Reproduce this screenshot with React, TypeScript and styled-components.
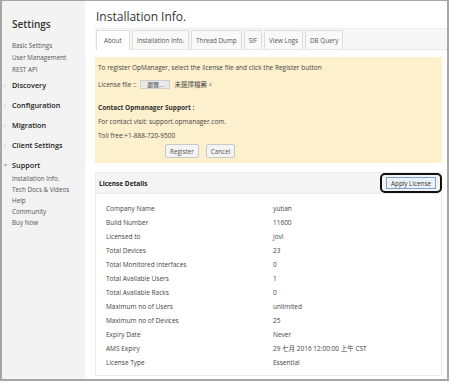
import React from "react";
import styled, { createGlobalStyle } from "styled-components";

const GlobalStyle = createGlobalStyle`
  html, body {
    margin: 0;
    padding: 0;
    background: #ffffff;
  }
  body {
    font-family: "Open Sans", "Noto Sans CJK TC", sans-serif;
    color: #444444;
  }
  * {
    box-sizing: border-box;
  }
`;

const sideGroups = [
  { title: "Discovery", open: false, items: [] as string[] },
  { title: "Configuration", open: false, items: [] as string[] },
  { title: "Migration", open: false, items: [] as string[] },
  { title: "Client Settings", open: false, items: [] as string[] },
  {
    title: "Support",
    open: true,
    items: ["Installation Info.", "Tech Docs & Videos", "Help", "Community", "Buy Now"],
  },
];

const tabs = ["About", "Installation Info.", "Thread Dump", "SIF", "View Logs", "DB Query"];

const details: [string, string][] = [
  ["Company Name", "yutian"],
  ["Build Number", "11600"],
  ["Licensed to", "jovi"],
  ["Total Devices", "23"],
  ["Total Monitored Interfaces", "0"],
  ["Total Available Users", "1"],
  ["Total Available Racks", "0"],
  ["Maximum no of Users", "unlimited"],
  ["Maximum no of Devices", "25"],
  ["Expiry Date", "Never"],
  ["AMS Expiry", "29 七月 2016 12:00:00 上午 CST"],
  ["License Type", "Essential"],
];

const App = () => {
  return (
    <Frame>
      <GlobalStyle />
      <Sidebar>
        <SideTitle>Settings</SideTitle>
        <SubList $top={9} $line={12}>
          <SubItem>Basic Settings</SubItem>
          <SubItem>User Management</SubItem>
          <SubItem>REST API</SubItem>
        </SubList>
        <GroupList>
          {sideGroups.map((g) => (
            <div key={g.title}>
              <GroupTitle>
                <Arrow>{g.open ? "▾" : "›"}</Arrow>
                {g.title}
              </GroupTitle>
              {g.items.length > 0 && (
                <SubList $top={1} $line={11}>
                  {g.items.map((i) => (
                    <SubItem key={i}>{i}</SubItem>
                  ))}
                </SubList>
              )}
            </div>
          ))}
        </GroupList>
      </Sidebar>
      <Main>
        <PageTitle>Installation Info.</PageTitle>
        <TabBar>
          {tabs.map((t, i) => (
            <Tab key={t} $active={i === 0}>
              {t}
            </Tab>
          ))}
        </TabBar>
        <Notice>
          <NoticeLine>
            To register OpManager, select the license file and click the Register button
          </NoticeLine>
          <FileRow>
            License file ::
            <FileButton>瀏覽...</FileButton>
            <span>未選擇檔案。</span>
          </FileRow>
          <NoticeBold>Contact Opmanager Support :</NoticeBold>
          <NoticeLine>For contact visit: support.opmanager.com.</NoticeLine>
          <NoticeLine>Toll free:+1-888-720-9500</NoticeLine>
          <ButtonRow>
            <PlainButton>Register</PlainButton>
            <PlainButton>Cancel</PlainButton>
          </ButtonRow>
        </Notice>
        <DetailsHeader>
          <HeaderLabel>License Details</HeaderLabel>
          <Circled>
            <ApplyButton>Apply License</ApplyButton>
          </Circled>
        </DetailsHeader>
        <DetailsPanel>
          {details.map(([k, v]) => (
            <DetailRow key={k}>
              <DetailKey>{k}</DetailKey>
              <DetailValue>{v}</DetailValue>
            </DetailRow>
          ))}
        </DetailsPanel>
      </Main>
    </Frame>
  );
};

const Frame = styled.div`
  display: flex;
  width: 449px;
  height: 381px;
  border: 1px solid #a6a6a6;
  border-left-width: 2px;
  border-right-width: 2px;
  border-bottom-width: 2px;
  overflow: hidden;
`;

const Sidebar = styled.div`
  width: 83px;
  flex-shrink: 0;
  background: #f3f3f3;
  padding: 16px 0 0 0;
`;

const SideTitle = styled.div`
  padding-left: 10px;
  font-size: 10px;
  font-weight: 600;
  color: #333;
  line-height: 14px;
`;

const SubList = styled.div<{ $top: number; $line: number }>`
  display: flex;
  flex-direction: column;
  padding: ${(p) => p.$top}px 0 0 10px;
  line-height: ${(p) => p.$line}px;
`;

const SubItem = styled.div`
  font-size: 6.3px;
  color: #555;
`;

const GroupList = styled.div`
  display: flex;
  flex-direction: column;
  gap: 7px;
  margin-top: 3px;
`;

const GroupTitle = styled.div`
  position: relative;
  padding-left: 10px;
  font-size: 7.3px;
  font-weight: 600;
  color: #222;
  line-height: 13px;
`;

const Arrow = styled.span`
  position: absolute;
  left: 2px;
  top: 0;
  font-size: 6px;
  color: #aaa;
  font-weight: 400;
`;

const Main = styled.div`
  flex: 1;
  padding: 7px 0 0 10px;
  display: flex;
  flex-direction: column;
`;

const PageTitle = styled.div`
  font-size: 12px;
  color: #333;
  line-height: 17px;
  padding-left: 1px;
`;

const TabBar = styled.div`
  display: flex;
  align-items: flex-end;
  gap: 2px;
  margin-top: 3px;
  height: 22px;
  padding-left: 1px;
  background: #f7f7f7;
  border-top: 1px solid #eeeeee;
  border-bottom: 1px solid #e6e6e6;
`;

const Tab = styled.div<{ $active?: boolean }>`
  padding: 0 ${(p) => (p.$active ? "7px" : "4px")};
  display: flex;
  align-items: center;
  font-size: 6.3px;
  color: #555;
  background: ${(p) => (p.$active ? "#ffffff" : "#f9f9f9")};
  border: 1px solid #dddddd;
  border-bottom: none;
  margin-bottom: ${(p) => (p.$active ? "-1px" : "0")};
  height: ${(p) => (p.$active ? "20px" : "19px")};
`;

const Notice = styled.div`
  margin: 7px 5px 0 0;
  background: #fdf0cd;
  padding: 4px 3px 5px;
  font-size: 6.5px;
  color: #444;
`;

const NoticeLine = styled.div`
  line-height: 14px;
`;

const FileRow = styled.div`
  display: flex;
  align-items: center;
  gap: 4px;
  height: 18px;
  margin-bottom: 8px;
`;

const FileButton = styled.span`
  display: inline-flex;
  align-items: center;
  justify-content: center;
  width: 30px;
  height: 9px;
  background: #e9e9e9;
  border: 1px solid #cfcfcf;
  font-size: 6px;
`;

const NoticeBold = styled.div`
  font-weight: 700;
  line-height: 14px;
  color: #333;
`;

const ButtonRow = styled.div`
  display: flex;
  gap: 7px;
  padding-left: 67px;
  margin-top: 1px;
`;

const PlainButton = styled.div`
  height: 14px;
  padding: 0 4px;
  display: flex;
  align-items: center;
  background: #f4f4f4;
  border: 1px solid #c8c8c8;
  border-radius: 2px;
  font-size: 6.3px;
  color: #555;
`;

const DetailsHeader = styled.div`
  margin: 9px 5px 0 0;
  height: 22px;
  display: flex;
  align-items: center;
  justify-content: space-between;
  background: #f4f4f4;
  border: 1px solid #ececec;
  padding: 0 0 0 3px;
`;

const HeaderLabel = styled.div`
  font-size: 6.5px;
  font-weight: 700;
  color: #222;
`;

const Circled = styled.div`
  border: 2px solid #111;
  border-radius: 5px;
  padding: 2px 4px;
  margin-right: -1px;
`;

const ApplyButton = styled.div`
  height: 12px;
  width: 50px;
  display: flex;
  align-items: center;
  justify-content: center;
  background: #edf2f8;
  border: 1px solid #7aa3cf;
  font-size: 6.3px;
  color: #333;
`;

const DetailsPanel = styled.div`
  margin-right: 5px;
  border: 1px solid #ececec;
  border-top: none;
  padding: 7px 0 6px 10px;
`;

const DetailRow = styled.div`
  display: flex;
  height: 14px;
  align-items: center;
  font-size: 6.5px;
  color: #444;
`;

const DetailKey = styled.div`
  width: 167px;
`;

const DetailValue = styled.div``;

export default App;
